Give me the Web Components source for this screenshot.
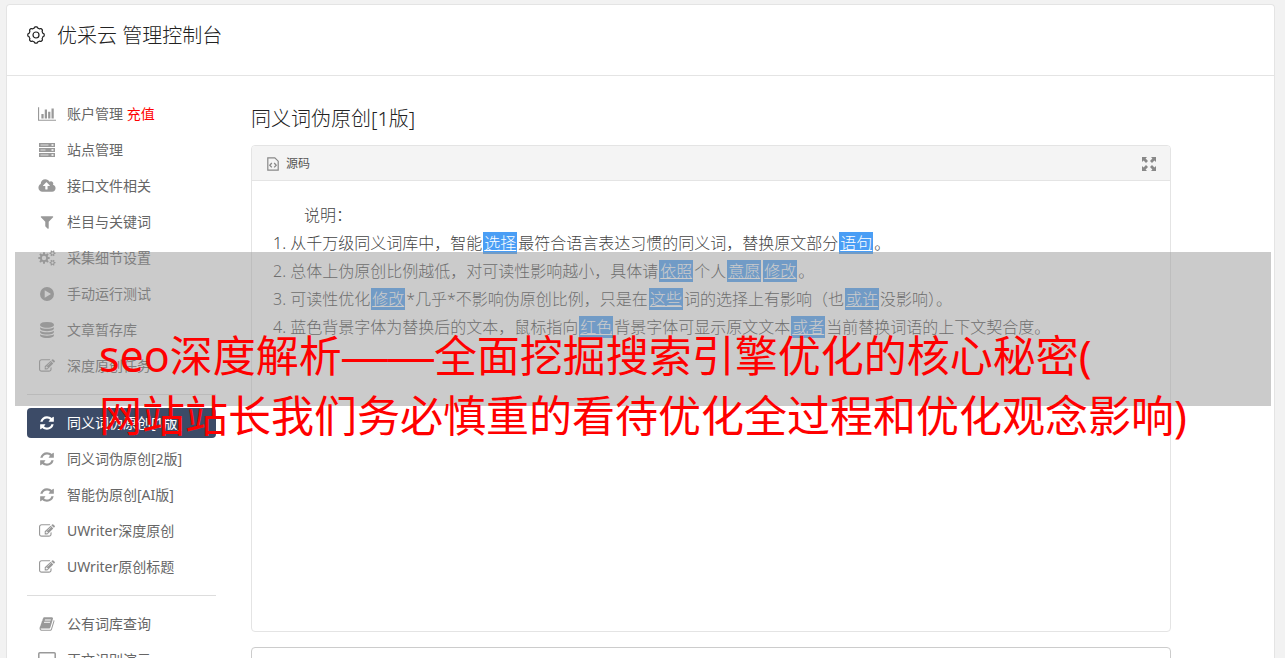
<!DOCTYPE html>
<html lang="zh-CN">
<head>
<meta charset="utf-8">
<title>优采云 管理控制台</title>
<style>
html { scrollbar-width: none; background: #f2f2f2; }
body { margin: 0; padding: 4px 10px 0 6px; overflow-x: hidden; position: relative;
  font-family: "Noto Sans", "Noto Sans CJK SC", sans-serif; font-size: 14px; line-height: 20px; color: #666; }
.dash { font-family: "Liberation Sans", sans-serif; font-size: 46px; line-height: 1; }
.recharge { color: #f00; }
</style>
</head>
<body>
<console-card>
  <console-header slot="header">优采云 管理控制台</console-header>
  <side-nav slot="nav">
    <nav-item icon="chart">账户管理 <span class="recharge">充值</span></nav-item>
    <nav-item icon="server">站点管理</nav-item>
    <nav-item icon="cloud">接口文件相关</nav-item>
    <nav-item icon="filter">栏目与关键词</nav-item>
    <nav-item icon="cogs">采集细节设置</nav-item>
    <nav-item icon="play">手动运行测试</nav-item>
    <nav-item icon="database">文章暂存库</nav-item>
    <nav-item icon="edit">深度原创任务</nav-item>
    <nav-divider></nav-divider>
    <nav-item icon="refresh" active>同义词伪原创[1版]</nav-item>
    <nav-item icon="refresh">同义词伪原创[2版]</nav-item>
    <nav-item icon="refresh">智能伪原创[AI版]</nav-item>
    <nav-item icon="edit">UWriter深度原创</nav-item>
    <nav-item icon="edit">UWriter原创标题</nav-item>
    <nav-divider></nav-divider>
    <nav-item icon="book">公有词库查询</nav-item>
    <nav-item icon="laptop">正文识别演示</nav-item>
  </side-nav>
  <rewrite-page heading="同义词伪原创[1版]">
    <editor-panel label="源码">
      <help-text></help-text>
    </editor-panel>
  </rewrite-page>
</console-card>
<caption-banner>
  <span slot="first">seo深度解析<span class="dash">——</span>全面挖掘搜索引擎优化的核心秘密(</span>
  <span slot="second">网站站长我们务必慎重的看待优化全过程和优化观念影响)</span>
</caption-banner>

<script>
// Closed path of a cog with rounded teeth around (cx, cy).
function cog(cx, cy, r, depth, teeth) {
  let d = '';
  const n = teeth * 16;
  for (let i = 0; i < n; i++) {
    const t = i / n * Math.PI * 2;
    const wave = Math.max(-1, Math.min(1, Math.cos(t * teeth) * 1.7));
    const q = r + depth * wave;
    d += (i ? 'L' : 'M') + (cx + q * Math.cos(t)).toFixed(2) + ' ' + (cy + q * Math.sin(t)).toFixed(2);
  }
  return d + 'Z';
}
function ring(cx, cy, r) {
  return `M${cx - r} ${cy}a${r} ${r} 0 1 0 ${2 * r} 0a${r} ${r} 0 1 0 ${-2 * r} 0Z`;
}

// name: [viewBox, width, height, markup]
const ICONS = {
  gear: ['0 0 18 18', 18, 18, `<g fill="none" stroke="currentColor" stroke-width="1.2"><path stroke-linejoin="round" d="${cog(9, 9, 7.6, 0.6, 8)}"/><circle cx="9" cy="9" r="3"/></g>`],
  chart: ['0 0 2048 1792', 18, 16, '<path d="M640 896v512H384V896h256zm384-512v1024H768V384h256zm1024 1152v128H0V128h128v1408h1920zM1408 640v768h-256V640h256zm384-384v1152h-256V256h256z"/>'],
  server: ['0 0 18 16', 18, 16, '<path d="M1 1h16v4H1zM1 6h16v4H1zM1 11h16v4H1z"/><path d="M2.5 3h8M2.5 8h5M2.5 13h8" stroke="#fff" stroke-width="1" opacity=".7"/><path d="M13.5 3h2M13.5 8h2M13.5 13h2" stroke="#fff" stroke-width="1.4"/>'],
  cloud: ['0 0 1920 1792', 18, 16, '<path d="M1280 864q0-14-9-23L919 489q-9-9-23-9t-23 9L522 840q-10 12-10 24 0 14 9 23t23 9h224v352q0 13 9.500 22.500t22.500 9.500h192q13 0 22.500-9.500t9.500-22.500V896h224q13 0 22.500-9.500t9.500-22.500zm640 288q0 159-112.500 271.500T1536 1536H448q-185 0-316.500-131.500T0 1088q0-130 70-240t188-165q-2-30-2-43 0-212 150-362t362-150q156 0 285.500 87T1242 430q71-62 166-62 106 0 181 75t75 181q0 76-41 138 130 31 213.500 135.500T1920 1152z"/>'],
  filter: ['0 0 1792 1792', 16, 16, '<path d="M1595 295q17 41-14 70l-493 493v742q0 42-39 59-13 5-25 5-27 0-45-19l-256-256q-19-19-19-45V858L211 365q-31-29-14-70 17-39 59-39h1280q42 0 59 39z"/>'],
  cogs: ['0 0 18 16', 18, 16, `<path fill-rule="evenodd" d="${cog(6, 8, 5, 0.9, 8)}${ring(6, 8, 2.2)}${cog(14.5, 3.3, 2.6, 0.5, 6)}${ring(14.5, 3.3, 1.1)}${cog(14.5, 12.7, 2.6, 0.5, 6)}${ring(14.5, 12.7, 1.1)}"/>`],
  play: ['0 0 16 16', 16, 16, `<path fill-rule="evenodd" d="${ring(8, 8, 7)}M5.700 4.200v7.600L12 8z"/>`],
  database: ['0 0 1792 1792', 16, 16, '<path d="M896 768q237 0 443-43t325-127v170q0 69-103 128t-280 93.500-385 34.500-385-34.500T231 896 128 768V598q119 84 325 127t443 43zm0 768q237 0 443-43t325-127v170q0 69-103 128t-280 93.500-385 34.500-385-34.500-280-93.500-103-128v-170q119 84 325 127t443 43zm0-384q237 0 443-43t325-127v170q0 69-103 128t-280 93.500-385 34.500-385-34.500-280-93.500-103-128V982q119 84 325 127t443 43zM896 0q208 0 385 34.500t280 93.500 103 128v128q0 69-103 128t-280 93.500T896 640t-385-34.500T231 512 128 384V256q0-69 103-128t280-93.500T896 0z"/>'],
  edit: ['0 0 1792 1792', 16, 16, '<path d="M888 1184l116-116-152-152-116 116v56h96v96h56zm440-720q-16-16-33 1L945 815q-17 17-1 33t33-1l350-350q17-17 1-33zm80 594v190q0 119-84.500 203.500T1120 1536H288q-119 0-203.500-84.500T0 1248V416q0-119 84.500-203.500T288 128h832q63 0 117 25 15 7 18 23 3 17-9 29l-49 49q-14 14-32 8-23-6-45-6H288q-66 0-113 47t-47 113v832q0 66 47 113t113 47h832q66 0 113-47t47-113v-126q0-13 9-22l64-64q15-15 35-7t20 29zm-96-738l288 288-672 672H640V928zm444 132l-92 92-288-288 92-92q28-28 68-28t68 28l152 152q28 28 28 68t-28 68z"/>'],
  refresh: ['0 0 1792 1792', 16, 16, '<path d="M1639 1056q0 5-1 7-64 268-268 434.500T892 1664q-146 0-282.500-55T366 1452l-129 129q-19 19-45 19t-45-19-19-45v-448q0-26 19-45t45-19h448q26 0 45 19t19 45-19 45l-137 137q71 66 161 102t187 36q134 0 250-65t186-179q11-17 53-117 8-23 30-23h192q13 0 22.500 9.500t9.500 22.500zm25-800v448q0 26-19 45t-45 19h-448q-26 0-45-19t-19-45 19-45l138-138Q1097 384 896 384q-134 0-250 65T460 628q-11 17-53 117-8 23-30 23H178q-13 0-22.500-9.500T146 736v-7q65-268 270-434.500T896 128q146 0 284 55.500T1425 340l130-129q19-19 45-19t45 19 19 45z"/>'],
  book: ['0 0 1792 1792', 16, 16, '<path d="M1703 478q40 57 18 129l-275 906q-19 64-76.500 107.500T1247 1664H324q-77 0-148.500-53.500T76 1479q-24-67-2-127 0-4 3-27t4-37q1-8-3-21.500t-3-19.500q2-11 8-21t16.500-23.500T116 1179q23-38 45-91.500t30-91.500q3-10 .5-30t-.5-28q3-11 17-28t17-23q21-36 42-92t25-90q1-9-2.500-32t.5-28q4-13 22-30.500t22-22.500q19-26 42.500-84.500T404 411q1-8-3-25.500t-2-26.500q2-8 9-18t18-23 17-21q8-12 16.500-30.500t15-35 16-36 19.500-32 26.500-23.500 36-11.500T620 133l-1 3q38-9 51-9h761q74 0 114 56t18 130l-274 906q-36 119-71.500 153.500T1089 1407H220q-27 0-38 15-11 16-1 43 24 70 144 70h923q29 0 56-15.500t35-41.500l300-987q7-22 5-57 38 15 59 43zm-1064 2q-4 13 2 22.500t20 9.500h608q13 0 25.500-9.500T1311 480l21-64q4-13-2-22.500t-20-9.500H702q-13 0-25.500 9.500T660 416zm-83 256q-4 13 2 22.500t20 9.500h608q13 0 25.500-9.500T1228 736l21-64q4-13-2-22.500t-20-9.500H619q-13 0-25.500 9.500T577 672z"/>'],
  laptop: ['0 0 18 16', 18, 16, '<rect x=".8" y=".8" width="16.400" height="11.500" rx="1" fill="none" stroke="currentColor" stroke-width="1.5"/><path d="M6 14h6v1.500H6z"/>'],
  source: ['0 0 12 14', 12, 14, '<path fill="none" stroke="currentColor" stroke-width="1.2" d="M.8.8h7l3.400 3.400v9H.8z"/><path fill="none" stroke="currentColor" stroke-width="1.300" d="M4.800 6 2.800 8.200l2 2.200M7.200 6l2 2.200-2 2.200"/>'],
  expand: ['0 0 14 14', 14, 14, '<path d="M0 0h5L3.600 1.600 6 4 4 6 1.600 3.600 0 5zM14 0v5l-1.600-1.400L10 6 8 4l2.400-2.400L9 0zM0 14V9l1.600 1.400L4 8l2 2-2.400 2.400L5 14zM14 14H9l1.400-1.600L8 10l2-2 2.400 2.400L14 9z"/>']
};

function define(name, render) {
  customElements.define(name, class extends HTMLElement {
    constructor() {
      super();
      this.attachShadow({ mode: 'open' });
    }
    connectedCallback() {
      const template = document.createElement('template');
      template.innerHTML = render(this);
      this.shadowRoot.replaceChildren(template.content.cloneNode(true));
    }
  });
}

define('ui-icon', el => {
  const [box, w, h, body] = ICONS[el.getAttribute('name')];
  return `<style>:host{display:inline-flex;align-items:center;justify-content:center}svg{display:block}</style>
    <svg viewBox="${box}" width="${w}" height="${h}" fill="currentColor" aria-hidden="true">${body}</svg>`;
});

define('console-card', () => `<style>
  :host{display:block;background:#fff;border:1px solid #e4e4e4;border-bottom:0;border-radius:4px 4px 0 0}
  .columns{display:flex;align-items:flex-start}
  ::slotted(side-nav){flex:none}
  ::slotted(rewrite-page){flex:1;min-width:0}
  </style><slot name="header"></slot><div class="columns"><slot name="nav"></slot><slot></slot></div>`);

define('console-header', () => `<style>
  :host{display:block;border-bottom:1px solid #e4e4e4}
  h1{display:flex;align-items:center;gap:12px;margin:0;padding:16px 20px 24px;font-size:20px;line-height:30px;font-weight:300;color:#222}
  ui-icon{padding-bottom:2px}
  </style><h1><ui-icon name="gear"></ui-icon><span><slot></slot></span></h1>`);

define('side-nav', () => `<style>
  :host{display:block;width:189px;padding:23px 0 24px 20px}
  nav{display:flex;flex-direction:column;gap:6px}
  </style><nav aria-label="控制台"><slot></slot></nav>`);

define('nav-item', el => `<style>
  :host{display:block}
  a{display:flex;align-items:center;gap:10px;height:30px;padding:0 10px;border-radius:4px;color:#666;text-decoration:none;white-space:nowrap}
  ui-icon{width:20px;color:#999}
  :host([active]) a{background:#3c4b67;color:#fff}
  :host([active]) ui-icon{color:#fff}
  </style><a href="#"${el.hasAttribute('active') ? ' aria-current="page"' : ''}><ui-icon name="${el.getAttribute('icon')}"></ui-icon><span><slot></slot></span></a>`);

define('nav-divider', () => `<style>:host{display:block;height:1px;margin:7px 0;background:#ddd}</style>`);

define('rewrite-page', el => `<style>
  :host{display:block;padding:30px 103px 24px 35px}
  h2{margin:0 0 13px;font-size:20px;line-height:26px;font-weight:300;color:#222}
  textarea{display:block;box-sizing:border-box;width:100%;height:120px;margin-top:15px;padding:8px;border:1px solid #ccc;border-radius:4px;background:#fff;resize:none;font:inherit;color:inherit}
  textarea:focus{outline:1px solid #4a9ef5}
  </style><h2>${el.getAttribute('heading')}</h2><slot></slot><textarea aria-label="原文"></textarea>`);

define('editor-panel', el => `<style>
  :host{display:block;border:1px solid #e4e4e4;border-radius:4px;background:#fff}
  header{display:flex;justify-content:space-between;align-items:center;box-sizing:border-box;height:35px;padding:2px 14px 0 15px;border-bottom:1px solid #e4e4e4;border-radius:3px 3px 0 0;background:#f4f4f4}
  button{display:flex;align-items:center;gap:7px;margin:0;padding:0;border:0;background:none;font-family:inherit;font-size:12px;line-height:20px;color:#555}
  ui-icon{color:#888}
  .body{min-height:410px;padding:20px}
  </style><header><button type="button"><ui-icon name="source"></ui-icon>${el.getAttribute('label')}</button>
  <button type="button" aria-label="全屏"><ui-icon name="expand"></ui-icon></button></header>
  <div class="body"><slot></slot></div>`);

define('help-text', () => `<style>
  :host{display:block;font-size:16px;line-height:28px;font-weight:300;color:#444}
  p{margin:0;text-indent:2em}
  ol{margin:0;padding:0 0 0 1px;list-style:none}
  a{margin:0 1px;padding:0 1px;background:#4a9ef5;color:#fff;text-decoration:underline}
  </style><p>说明：</p>
  <ol>
  <li>1. 从千万级同义词库中，智能<a href="#">选择</a>最符合语言表达习惯的同义词，替换原文部分<a href="#">语句</a>。</li>
  <li>2. 总体上伪原创比例越低，对可读性影响越小，具体请<a href="#">依照</a>个人<a href="#">意愿</a><a href="#">修改</a>。</li>
  <li>3. 可读性优化<a href="#">修改</a>*几乎*不影响伪原创比例，只是在<a href="#">这些</a>词的选择上有影响（也<a href="#">或许</a>没影响）。</li>
  <li>4. 蓝色背景字体为替换后的文本，鼠标指向<a href="#">红色</a>背景字体可显示原文文本<a href="#">或者</a>当前替换词语的上下文契合度。</li>
  </ol>`);

// Translucent band laid over the page, with a two-line caption that runs past its lower edge.
define('caption-banner', () => `<style>
  :host{position:absolute;top:252px;left:15px;right:14px;box-sizing:border-box;height:154px;padding:74px 0 0 84px;background:rgba(151,151,151,.5);font-size:43px;line-height:60px;color:#f00;white-space:nowrap;pointer-events:none}
  p{margin:0}
  </style><p><slot name="first"></slot></p><p><slot name="second"></slot></p>`);
</script>
</body>
</html>
